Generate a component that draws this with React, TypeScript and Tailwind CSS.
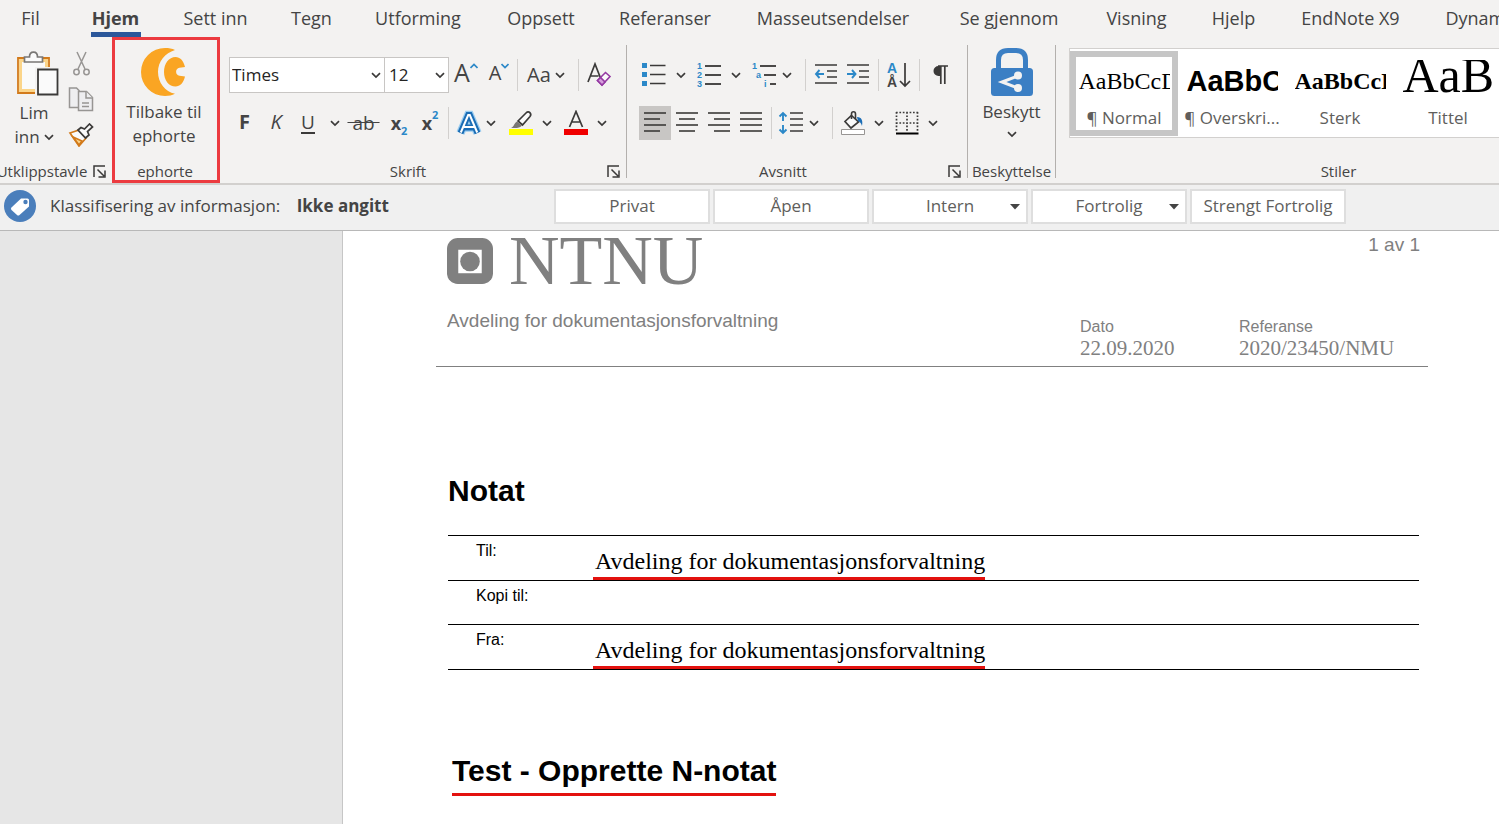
import type { ReactNode } from "react";

const ink = "#3b3a39";
const blue = "#2b88c8";

const tabs = [
  { name: "Fil", width: "w-[21px]" },
  { name: "Hjem", width: "ml-2 w-[47px]", active: true },
  { name: "Sett inn", width: "w-[67px]" },
  { name: "Tegn", width: "w-[39px]" },
  { name: "Utforming", width: "w-[88px]" },
  { name: "Oppsett", width: "w-[72px]" },
  { name: "Referanser", width: "w-[90px]" },
  { name: "Masseutsendelser", width: "w-[160px]" },
  { name: "Se gjennom", width: "w-[106px]" },
  { name: "Visning", width: "w-[63px]" },
  { name: "Hjelp", width: "w-[45px]" },
  { name: "EndNote X9", width: "w-[103px]" },
  { name: "Dynamics 365", width: "w-[118px]" },
];

function Chevron() {
  return (
    <svg width="10" height="7" viewBox="0 0 10 7" fill="none" stroke={ink} strokeWidth="1.7">
      <path d="M1 1.2l4 3.8 4-3.8" />
    </svg>
  );
}

function Drop({ label }: { label: string }) {
  return (
    <button aria-label={label} className="flex h-8 w-4 shrink-0 items-center justify-center">
      <Chevron />
    </button>
  );
}

function Tool({
  label,
  width = "w-8",
  active,
  children,
}: {
  label: string;
  width?: string;
  active?: boolean;
  children: ReactNode;
}) {
  return (
    <button
      aria-label={label}
      className={`flex h-[34px] shrink-0 items-center justify-center ${width} ${active ? "bg-[#c8c6c4]" : ""}`}
    >
      {children}
    </button>
  );
}

function Sep({ margin = "mx-1" }: { margin?: string }) {
  return <span className={`h-8 w-px shrink-0 bg-[#d2d0ce] ${margin}`} />;
}

function Launcher({ label }: { label: string }) {
  return (
    <button aria-label={label} className="absolute right-1.5 bottom-0">
      <svg width="13" height="13" viewBox="0 0 13 13" fill="none" stroke={ink} strokeWidth="1.5">
        <path d="M1 12V1h11M4.5 4.5l6.5 6.5M12 5.5V12H5.5" />
      </svg>
    </button>
  );
}

function Group({
  label,
  width,
  launcher,
  children,
}: {
  label: string;
  width: string;
  launcher?: boolean;
  children: ReactNode;
}) {
  return (
    <section
      aria-label={label}
      className={`relative mt-[7px] flex h-[133px] shrink-0 flex-col border-r border-[#b3b0ad] ${width}`}
    >
      <div className="flex-1">{children}</div>
      <div className={`flex h-3.5 items-center justify-center text-[15px] whitespace-nowrap ${launcher ? "pr-7" : ""}`}>
        {label}
      </div>
      {launcher && <Launcher label={`${label}, alternativer`} />}
    </section>
  );
}

function Lines({ rows }: { rows: number[][] }) {
  return (
    <svg width="24" height="24" viewBox="0 0 24 24" stroke={ink} strokeWidth="1.6">
      {rows.map(([x1, x2, y]) => (
        <path key={y} d={`M${x1} ${y}H${x2}`} />
      ))}
    </svg>
  );
}

function Clipboard() {
  return (
    <Group label="Utklippstavle" width="w-[113px]" launcher>
      <div className="flex gap-2 pt-1 pl-2">
        <button className="flex w-[52px] flex-col items-center text-[17px] leading-6">
          <svg className="mb-1 ml-2" width="44" height="48" viewBox="0 0 44 48" fill="none">
            <path d="M2 9h31v35H2z" fill="#fafafa" stroke="#d27a1b" strokeWidth="1.8" />
            <path d="M4.500 11.500h26v30h-26z" stroke="#fbd58a" strokeWidth="3" />
            <path d="M8.500 13V8h5c0-6.500 8-6.500 8 0h5v5z" fill="#fafafa" stroke="#797775" strokeWidth="1.7" />
            <path d="M19 18h25v30H19z" fill="#f3f2f1" />
            <path d="M22 20.500h19.500v25H22z" fill="#fafafa" stroke={ink} strokeWidth="1.8" />
          </svg>
          <span>Lim</span>
          <span className="flex items-center gap-1">
            inn <Chevron />
          </span>
        </button>
        <div className="flex flex-col items-center gap-[10px] pt-0.5">
          <button aria-label="Klipp ut">
            <svg width="26" height="26" viewBox="0 0 26 26" fill="none" stroke="#979593" strokeWidth="1.5">
              <path d="M9 1l8 17M18 1l-8 17" />
              <circle cx="8.500" cy="21" r="2.700" />
              <circle cx="18.500" cy="21" r="2.700" />
            </svg>
          </button>
          <button aria-label="Kopier">
            <svg width="26" height="26" viewBox="0 0 26 26" fill="#eeeef0" stroke="#979593" strokeWidth="1.500">
              <path d="M10 20.500H1.500V1h7l3 3" />
              <path d="M10.500 4.500h8l6 6v13h-14z" />
              <path d="M18 4.500v6.500h6.500M14 16h7M14 19.500h7" />
            </svg>
          </button>
          <button aria-label="Kopier format">
            <svg width="26" height="24" viewBox="0 0 26 24" fill="#fafafa" strokeWidth="1.700">
              <path d="M2 10l9-3 7 8-7 8z" stroke="#d27a1b" />
              <path d="M5 14l9 4-3 4z" fill="#fbd58a" stroke="#d27a1b" />
              <path d="M10 7l3-2.500 3.500 1.500L21.500 1l3 3-5 4.500 1.500 3.500-3.500 3z" stroke={ink} />
            </svg>
          </button>
        </div>
      </div>
    </Group>
  );
}

function Ephorte() {
  return (
    <Group label="ephorte" width="w-[105px]">
      <button className="flex w-full flex-col items-center pt-[3px] pr-0.5 text-[17px] leading-6">
        <svg width="46" height="48" viewBox="0 0 46 48" fill="#faa523">
          <path d="M34 2C31 .6 28 0 24 0a24 24 0 0 0 0 48c4 0 7-.6 10-2.200C24 43.500 17 34.500 17 24S24 5 34 2z" />
          <path d="M44 19C42.500 12.500 39 9 34.500 9 28 9 23 15.500 23 24s5 14.500 11.500 14.500C39 38.500 42.500 35 44 28.500l-5.500-.7c-4.500-.5-4.500-7.500 0-8z" />
        </svg>
        <span className="mt-1">Tilbake til</span>
        <span>ephorte</span>
      </button>
      <div className="pointer-events-none absolute -top-2 -right-[3px] -bottom-[5px] -left-px border-[3px] border-[#ec3b40]" />
    </Group>
  );
}

function FontTools() {
  return (
    <Group label="Skrift" width="w-[409px]" launcher>
      <div className="flex h-[60px] items-center pl-[11px]">
        <div className="relative flex items-center">
          <select
            aria-label="Skrifttype"
            className="h-9 w-[156px] appearance-none border border-[#c8c6c4] bg-white pl-0.5 text-[17px] text-[#252423]"
          >
            <option>Times</option>
          </select>
          <span className="pointer-events-none absolute right-1">
            <Chevron />
          </span>
        </div>
        <div className="relative flex items-center">
          <select
            aria-label="Skriftstørrelse"
            className="h-9 w-16 appearance-none border border-l-0 border-[#c8c6c4] bg-white pl-1 text-[17px] text-[#252423]"
          >
            <option>12</option>
          </select>
          <span className="pointer-events-none absolute right-1">
            <Chevron />
          </span>
        </div>
        <Tool label="Forstørr skrift" width="w-[34px] pb-1.5">
          <span className="text-[25px] leading-6">A</span>
          <svg className="mb-3" width="8" height="6" viewBox="0 0 8 6" fill="none" stroke={blue} strokeWidth="1.700">
            <path d="M.5 5L4 1.500 7.500 5" />
          </svg>
        </Tool>
        <Tool label="Forminsk skrift" width="w-8 pb-1">
          <span className="text-[20px] leading-6">A</span>
          <svg className="mb-3.5" width="8" height="6" viewBox="0 0 8 6" fill="none" stroke={blue} strokeWidth="1.700">
            <path d="M.5 1L4 4.500 7.500 1" />
          </svg>
        </Tool>
        <Sep margin="mx-0.5" />
        <Tool label="Bytt store/små bokstaver" width="w-[52px]">
          <span className="mr-1 text-[20px]">Aa</span>
          <Chevron />
        </Tool>
        <Sep margin="ml-1.5 mr-0.5" />
        <Tool label="Fjern formatering" width="w-9">
          <svg width="26" height="26" viewBox="0 0 26 26" fill="none">
            <path d="M2 20L9 2l5.500 14M4.500 14h8" stroke={ink} strokeWidth="1.700" />
            <path d="M11.500 18.500l8-8 4.500 4-8 8.500z" fill="#fafafa" stroke="#953aa3" strokeWidth="1.600" />
            <path d="M11.500 18.500l3-3 4.500 4.500-3 3z" fill="#d59ddc" stroke="#953aa3" strokeWidth="1.600" />
          </svg>
        </Tool>
      </div>
      <div className="flex h-9 items-center pl-[11px]">
        <Tool label="Fet" width="w-[31px] pb-0.5">
          <b className="text-[20px]">F</b>
        </Tool>
        <Tool label="Kursiv" width="w-8 pb-0.5">
          <i className="text-[20px]">K</i>
        </Tool>
        <Tool label="Understreking">
          <span className="border-b-2 border-[#3b3a39] text-[19px] leading-5">U</span>
        </Tool>
        <span className="ml-[3px] flex">
          <Drop label="Understrekingsstil" />
        </span>
        <Tool label="Gjennomstreking" width="w-[41px]">
          <span className="text-[19px] line-through">&nbsp;ab&nbsp;</span>
        </Tool>
        <Tool label="Senket skrift" width="w-[30px]">
          <b className="text-[18px]">x</b>
          <b className="mt-4 text-[11px] text-[#2b88c8]">2</b>
        </Tool>
        <Tool label="Hevet skrift">
          <b className="text-[18px]">x</b>
          <b className="mb-4 text-[11px] text-[#2b88c8]">2</b>
        </Tool>
        <Sep margin="ml-0.5 mr-1.5" />
        <Tool label="Teksteffekter" width="w-7">
          <svg width="26" height="26" viewBox="0 0 26 26" fill="none">
            <path d="M4.500 23L12.200 5h1.600l7.700 18M8 17.500h10" stroke="#9bcdf0" strokeWidth="8.500" />
            <path d="M4.500 23L12.200 5h1.600l7.700 18M8 17.500h10" stroke="#1b6db5" strokeWidth="6" />
            <path d="M4.800 22.500L12.200 5h1.600l7.400 17.500M8 17h10" stroke="#fff" strokeWidth="2" />
          </svg>
        </Tool>
        <Drop label="Flere teksteffekter" />
        <Tool label="Merkingsfarge" width="ml-1 w-9">
          <svg width="26" height="26" viewBox="0 0 26 26" fill="none">
            <path d="M10 11l8-8c3-3 6 1 4 3.500L14.500 15z" fill="#fafafa" stroke={ink} strokeWidth="1.700" />
            <path d="M9 11.500l5 4c-2 3-6 2.500-11 2.500 3-1 3-5 6-6.500z" fill="#797775" />
            <path d="M1 19h24v6H1z" fill="#ffff00" />
          </svg>
        </Tool>
        <Drop label="Velg merkingsfarge" />
        <Tool label="Skriftfarge" width="ml-[3px] w-9">
          <svg width="26" height="26" viewBox="0 0 26 26" fill="none">
            <path d="M6.500 17L13 1.500 19.500 17M8.500 12h9" stroke={ink} strokeWidth="1.700" />
            <path d="M1 19h24v6H1z" fill="#f00000" />
          </svg>
        </Tool>
        <Drop label="Velg skriftfarge" />
      </div>
    </Group>
  );
}

function IndentIcon({ arrow }: { arrow: string }) {
  return (
    <svg width="24" height="24" viewBox="0 0 24 24" fill="none" strokeWidth="1.600">
      <path d="M1 2h22M13 8h10M13 14h10M1 20h22" stroke={ink} />
      <path d={arrow} stroke={blue} strokeWidth="1.900" />
    </svg>
  );
}

const numbered = [
  { mark: "1", indent: "" },
  { mark: "2", indent: "" },
  { mark: "3", indent: "" },
];

const multilevel = [
  { mark: "1", indent: "" },
  { mark: "a", indent: "pl-1" },
  { mark: "i", indent: "pl-3" },
];

function ListMarks({ rows }: { rows: typeof numbered }) {
  return (
    <span className="flex w-6 flex-col font-['Liberation_Sans',sans-serif] text-[9px] leading-[9px] font-bold text-[#2b88c8]">
      {rows.map((row) => (
        <span key={row.mark} className={`flex items-center gap-[3px] ${row.indent}`}>
          {row.mark}
          <span className="h-0.5 flex-1 bg-[#4a4948]" />
        </span>
      ))}
    </span>
  );
}

function Paragraph() {
  return (
    <Group label="Avsnitt" width="w-[341px]" launcher>
      <div className="flex h-[60px] items-center pl-3">
        <Tool label="Punktmerking" width="w-[30px]">
          <svg width="24" height="24" viewBox="0 0 24 24">
            <path d="M0 0h5v5H0zM0 9h5v5H0zM0 18h5v5H0z" fill={blue} />
            <path d="M8 2.500H23.500M8 11.500H23.500M8 20.500H23.500" stroke={ink} strokeWidth="1.600" />
          </svg>
        </Tool>
        <span className="ml-1 flex">
          <Drop label="Punktmerkingsbibliotek" />
        </span>
        <Tool label="Nummerering" width="ml-[5px] w-[30px]">
          <ListMarks rows={numbered} />
        </Tool>
        <span className="ml-1 flex">
          <Drop label="Nummereringsbibliotek" />
        </span>
        <Tool label="Liste med flere nivåer" width="ml-[5px] w-[30px]">
          <ListMarks rows={multilevel} />
        </Tool>
        <Drop label="Listebibliotek" />
        <Sep margin="ml-[10px] mr-1" />
        <Tool label="Reduser innrykk">
          <IndentIcon arrow="M10 11H2M5.500 7L2 11l3.500 4" />
        </Tool>
        <Tool label="Øk innrykk">
          <IndentIcon arrow="M1 11h8M6 7l3.500 4L6 15" />
        </Tool>
        <Sep />
        <Tool label="Sorter">
          <span className="flex flex-col font-['Liberation_Sans',sans-serif] text-[14px] leading-[14px] font-bold">
            <span className="text-[#2b88c8]">A</span>
            <span>Å</span>
          </span>
          <svg className="ml-0.5" width="12" height="26" viewBox="0 0 12 26" fill="none" stroke={ink} strokeWidth="1.700">
            <path d="M6 1v23M1 19l5 5 5-5" />
          </svg>
        </Tool>
        <Sep />
        <Tool label="Vis alle">
          <svg width="16" height="20" viewBox="0 0 16 20">
            <path d="M15.500 1H6.500a5 5 0 0 0 0 10H9V1z" fill={ink} />
            <path d="M8.800 1v18M12.800 1v18M6 1h10" stroke={ink} strokeWidth="1.700" />
          </svg>
        </Tool>
      </div>
      <div className="flex h-9 items-center pl-3">
        <Tool label="Venstrejuster" active>
          <Lines rows={[[1, 23, 2], [1, 17, 8], [1, 23, 14], [1, 17, 20]]} />
        </Tool>
        <Tool label="Midtstill">
          <Lines rows={[[1, 23, 2], [4, 20, 8], [1, 23, 14], [4, 20, 20]]} />
        </Tool>
        <Tool label="Høyrejuster">
          <Lines rows={[[1, 23, 2], [7, 23, 8], [1, 23, 14], [7, 23, 20]]} />
        </Tool>
        <Tool label="Blokkjuster">
          <Lines rows={[[1, 23, 2], [1, 23, 8], [1, 23, 14], [1, 23, 20]]} />
        </Tool>
        <Sep />
        <Tool label="Linjeavstand" width="w-[30px]">
          <svg width="26" height="24" viewBox="0 0 26 24" fill="none">
            <path d="M5 2v8M1.500 5.500L5 2l3.500 3.500M5 14v8M1.500 18.500L5 22l3.500-3.500" stroke={blue} strokeWidth="1.900" />
            <path d="M12 2h13M12 8h13M12 14h13M12 20h13" stroke={ink} strokeWidth="1.600" />
          </svg>
        </Tool>
        <Drop label="Velg linjeavstand" />
        <Sep margin="ml-[10px] mr-1" />
        <Tool label="Skyggelegging">
          <svg width="26" height="26" viewBox="0 0 26 26" fill="none">
            <path d="M11.500 5.500l7 6.500-7.500 6L5 11.500z" fill="#fafafa" stroke={ink} strokeWidth="1.700" />
            <path d="M11.500 9V4c0-3 4-3 4 0v5" stroke={ink} strokeWidth="1.600" />
            <path d="M17 7c5 0 6 4 5 9-1-3-2-4-4-5z" fill="#1b6db5" />
            <path d="M1.500 19.500h23v5h-23z" fill="#fff" stroke="#979593" />
          </svg>
        </Tool>
        <span className="ml-0.5 flex">
          <Drop label="Velg skyggelegging" />
        </span>
        <Tool label="Kantlinjer" width="ml-1 w-8">
          <svg width="24" height="24" viewBox="0 0 24 24" fill="none" stroke={ink} strokeWidth="1.700">
            <path d="M1 1.500h22.500M1 12h22.500M1.500 1v20M12 1v20M22.500 1v20" strokeDasharray="1.700 1.700" />
            <path d="M1 22.500h22.500" stroke="#000" strokeWidth="2" />
          </svg>
        </Tool>
        <span className="ml-0.5 flex">
          <Drop label="Velg kantlinjer" />
        </span>
      </div>
    </Group>
  );
}

function Protection() {
  return (
    <Group label="Beskyttelse" width="w-[88px]">
      <button className="flex w-full flex-col items-center pt-[3px] text-[17px] leading-6">
        <svg width="42" height="48" viewBox="0 0 42 48" fill="none">
          <path d="M7.500 24V12Q7.500 2.500 17 2.500h8Q34.500 2.500 34.500 12v12" stroke="#3b7fc4" strokeWidth="5" />
          <rect y="20" width="42" height="28" rx="3.500" fill="#3b7fc4" />
          <path d="M27 28L11 34l16 6" stroke="#f3f2f1" strokeWidth="3" />
          <circle cx="27" cy="27.500" r="4" fill="#f3f2f1" />
          <circle cx="27" cy="40" r="4" fill="#f3f2f1" />
        </svg>
        <span className="mt-1 mb-[7px]">Beskytt</span>
        <Chevron />
      </button>
    </Group>
  );
}

const styles = [
  { name: "¶ Normal", sample: "AaBbCcDd", font: "font-['Liberation_Serif',serif] text-[24px]", selected: true },
  { name: "¶ Overskri...", sample: "AaBbCc", font: "font-['Liberation_Sans',sans-serif] text-[29px] font-bold" },
  { name: "Sterk", sample: "AaBbCcDd", font: "font-['Liberation_Serif',serif] text-[24px] font-bold" },
  { name: "Tittel", sample: "AaBb", font: "pb-3 font-['Liberation_Serif',serif] text-[50px]" },
];

function Styles() {
  return (
    <Group label="Stiler" width="w-[566px]">
      <div className="mt-[3px] ml-[13px] flex h-[90px] border border-[#d2d0ce] bg-white pt-0.5">
        {styles.map((style) => (
          <button
            key={style.name}
            className={`flex h-[85px] w-[108px] shrink-0 flex-col items-center border-[6px] ${
              style.selected ? "border-[#c6c6c6]" : "border-transparent"
            }`}
          >
            <span
              className={`mt-[3px] flex h-[42px] w-[91px] shrink-0 items-center overflow-hidden leading-10 whitespace-nowrap text-black ${style.font}`}
            >
              {style.sample}
            </span>
            <span className="mt-1 text-[17px] leading-6 whitespace-nowrap text-[#605e5c]">{style.name}</span>
          </button>
        ))}
      </div>
    </Group>
  );
}

const levels = [
  { name: "Privat" },
  { name: "Åpen" },
  { name: "Intern", menu: true },
  { name: "Fortrolig", menu: true },
  { name: "Strengt Fortrolig" },
];

function ClassificationBar() {
  return (
    <div className="flex h-12 items-center border-t-2 border-b border-t-[#d2d0ce] border-b-[#b8b8b8] bg-[#f0f0f0] pb-[3px] pl-1 text-[17px]">
      <svg className="shrink-0" width="32" height="32" viewBox="0 0 32 32">
        <circle cx="16" cy="16" r="16" fill="#4a7ebb" />
        <path d="M7.500 17.500L17 8.500h6.500q1.500 0 1.500 1.500v6.500L15.500 25q-1.200 1-2.500 0l-5.500-5q-1.200-1.200 0-2.500z" fill="#fff" />
        <circle cx="21.500" cy="12" r="2.200" fill="#4a7ebb" />
      </svg>
      <p className="ml-3.5 w-[504px] shrink-0 pb-px">
        Klassifisering av informasjon: <b className="ml-3">Ikke angitt</b>
      </p>
      <div className="flex gap-[3px]">
        {levels.map((level) => (
          <button
            key={level.name}
            className="relative h-[35px] w-[156px] shrink-0 border-2 border-[#dedede] bg-white pb-px whitespace-nowrap text-[#605e5c]"
          >
            {level.name}
            {level.menu && (
              <svg className="absolute top-[13px] right-1.5" width="10" height="6" viewBox="0 0 10 6" fill="#444">
                <path d="M0 0h10L5 5.500z" />
              </svg>
            )}
          </button>
        ))}
      </div>
    </div>
  );
}

const recipients = [
  { label: "Til:", value: "Avdeling for dokumentasjonsforvaltning" },
  { label: "Kopi til:", value: "" },
  { label: "Fra:", value: "Avdeling for dokumentasjonsforvaltning" },
];

function Document() {
  return (
    <main className="flex flex-1 bg-[#e6e6e6] font-['Liberation_Sans',sans-serif]">
      <div className="w-[343px] shrink-0 border-r border-[#c6c6c6]" />
      <article className="flex-1 bg-white pr-[71px] pb-6 pl-[93px] text-black">
        <header className="flex h-[136px] justify-between border-b border-[#808080] pr-2 pl-[11px] text-[#808080]">
          <div>
            <div className="flex h-[60px] items-center gap-4">
              <svg width="46" height="46" viewBox="0 0 47 47">
                <rect width="47" height="47" rx="11" fill="#808080" />
                <path d="M11.500 12h24v24h-24z" fill="#fff" />
                <circle cx="23.500" cy="24" r="10" fill="#808080" />
              </svg>
              <span className="font-['Liberation_Serif',serif] text-[70px] leading-[60px]">NTNU</span>
            </div>
            <p className="mt-[18px] text-[19px] leading-6">Avdeling for dokumentasjonsforvaltning</p>
          </div>
          <div className="flex flex-col">
            <p className="text-right text-[19px] leading-7">1 av 1</p>
            <dl className="mt-[57px] flex text-[16px]">
              <div className="w-[159px]">
                <dt className="leading-[22px]">Dato</dt>
                <dd className="font-['Liberation_Serif',serif] text-[21px] leading-[21px]">22.09.2020</dd>
              </div>
              <div className="w-[181px]">
                <dt className="leading-[22px]">Referanse</dt>
                <dd className="font-['Liberation_Serif',serif] text-[21px] leading-[21px]">2020/23450/NMU</dd>
              </div>
            </dl>
          </div>
        </header>
        <div className="pr-[9px] pl-3">
          <h1 className="mt-[106px] text-[30px] leading-9 font-bold">Notat</h1>
          <table className="mt-[26px] w-full border-collapse">
            <tbody>
              {recipients.map((row) => (
                <tr key={row.label} className={`border-y border-black ${row.value ? "h-[45px]" : "h-11"}`}>
                  <th className="w-[145px] pt-1 pl-7 text-left align-top text-[16px] leading-[22px] font-normal">
                    {row.label}
                  </th>
                  <td className="p-0 align-bottom font-['Liberation_Serif',serif] text-[24px]">
                    {row.value && (
                      <span className="inline-block border-b-[3px] border-[#e3120f] pl-0.5 align-bottom leading-8">
                        {row.value}
                      </span>
                    )}
                  </td>
                </tr>
              ))}
            </tbody>
          </table>
          <h2 className="mt-[85px] ml-1 w-fit border-b-[3px] border-[#e3120f] pb-1.5 text-[30px] leading-8 font-bold">
            Test - Opprette N-notat
          </h2>
        </div>
      </article>
    </main>
  );
}

export default function App() {
  return (
    <div className="flex min-h-screen flex-col overflow-hidden bg-[#f3f2f1] font-['Open_Sans','Noto_Sans',sans-serif] text-[#444]">
      <nav className="flex h-[38px] gap-[43px] overflow-hidden pl-5 text-[18px]">
        {tabs.map((tab) => (
          <button
            key={tab.name}
            className={`flex h-[38px] shrink-0 flex-col items-center whitespace-nowrap ${tab.width} ${
              tab.active ? "font-bold" : ""
            }`}
          >
            <span className="leading-9">{tab.name}</span>
            {tab.active && <span className="-mt-1 h-[5px] w-[50px] shrink-0 bg-[#2b579a]" />}
          </button>
        ))}
      </nav>
      <div className="flex h-[145px] overflow-x-clip">
        <Clipboard />
        <Ephorte />
        <FontTools />
        <Paragraph />
        <Protection />
        <Styles />
      </div>
      <ClassificationBar />
      <Document />
    </div>
  );
}
